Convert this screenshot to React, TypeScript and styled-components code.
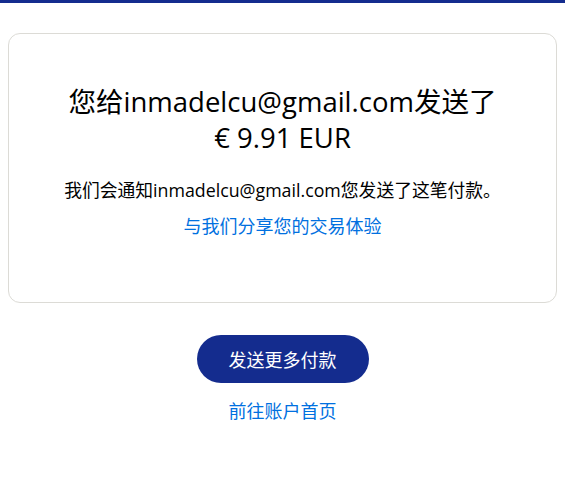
import React from 'react';
import styled, { createGlobalStyle } from 'styled-components';

const GlobalStyle = createGlobalStyle`
  html, body {
    margin: 0;
    padding: 0;
    background: #ffffff;
  }
  body {
    font-family: "Open Sans", "Noto Sans CJK SC", sans-serif;
    color: #001435;
  }
`;

const TopBar = styled.div`
  height: 3px;
  background: #142c8e;
`;

const Page = styled.main`
  display: flex;
  flex-direction: column;
  align-items: center;
  padding: 30px 8px 0;
`;

const Card = styled.section`
  box-sizing: border-box;
  width: 100%;
  border: 1px solid #dcdbd6;
  border-radius: 12px;
  padding: 50px 16px 64px;
  display: flex;
  flex-direction: column;
  align-items: center;
  text-align: center;
`;

const Title = styled.h1`
  margin: 0;
  font-size: 27.5px;
  font-weight: 400;
  line-height: 36px;
  color: #000000;
`;

const Message = styled.p`
  margin: 22px 0 0;
  font-size: 17.8px;
  line-height: 24px;
  color: #000000;
`;

const Link = styled.a<{ $gap: number }>`
  margin-top: ${p => p.$gap}px;
  font-size: 18px;
  line-height: 24px;
  color: #0070e0;
  text-decoration: none;
  cursor: pointer;
`;

const PrimaryButton = styled.button`
  margin-top: 32px;
  height: 48px;
  padding: 0 32px;
  border: none;
  border-radius: 24px;
  background: #142c8e;
  color: #ffffff;
  font-family: "Open Sans", "Noto Sans CJK SC", sans-serif;
  font-size: 18px;
  cursor: pointer;
`;

export default function App() {
  return (
    <>
      <GlobalStyle />
      <TopBar />
      <Page>
        <Card>
          <Title>
            您给inmadelcu@gmail.com发送了
            <br />€ 9.91 EUR
          </Title>
          <Message>我们会通知inmadelcu@gmail.com您发送了这笔付款。</Message>
          <Link $gap={12}>与我们分享您的交易体验</Link>
        </Card>
        <PrimaryButton>发送更多付款</PrimaryButton>
        <Link $gap={16}>前往账户首页</Link>
      </Page>
    </>
  );
}
